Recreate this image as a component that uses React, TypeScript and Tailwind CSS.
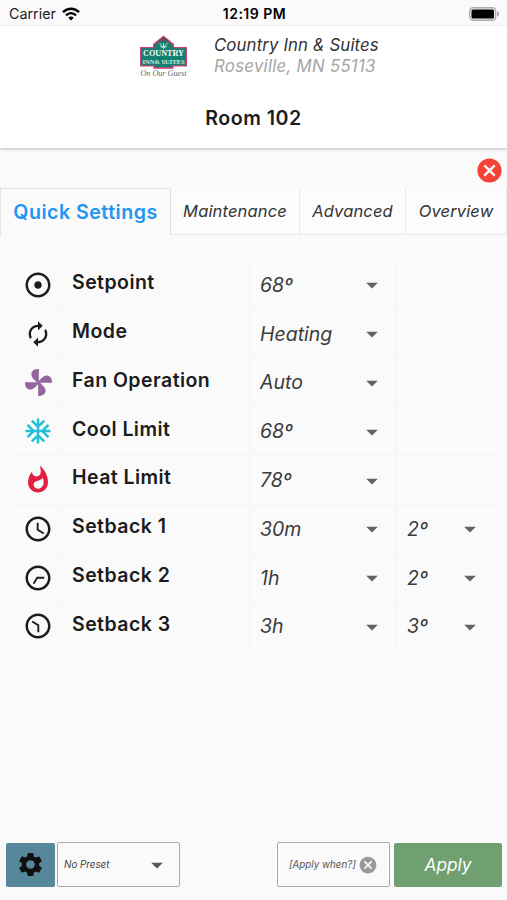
import type { ReactNode } from "react";
import { MdAccessTime, MdAcUnit, MdAdjust, MdArrowDropDown, MdAutorenew, MdCancel, MdSettings, MdWhatshot } from "react-icons/md";

const blade = "M1 1 V-40 C-12 -41 -21 -34 -21 -24 C-21 -15 -12 -8 -3 1 Z";

function FanIcon() {
    return (
        <svg width="27" height="27" viewBox="-40 -40 80 80" fill="#93669d">
            <path d={blade} />
            <path d={blade} transform="rotate(90)" />
            <path d={blade} transform="rotate(180)" />
            <path d={blade} transform="rotate(270)" />
        </svg>
    );
}

function HotelLogo() {
    return (
        <svg width="50" height="44" viewBox="0 0 50 44">
            <path d="M24.5 0.5 L35 9 V12 H48 V31.5 H34.5 V33.7 H14.5 V31.5 H1 V12 H14 V9 Z" fill="#c94070" />
            <path d="M24.5 3 L33.5 10 V13.3 H46.7 V30.2 H33.2 V32.3 H15.8 V30.2 H2.3 V13.3 H15.5 V10 Z" fill="#128073" />
            <path d="M24.5 2 L30 6.5 H19 Z" fill="#59505a" />
            <path d="M20.5 8 L24 12 M28.5 8 L25 12 M24.5 8 V14 M21 11.3 L24.5 12.8 L28 11.3" stroke="#b9dcd5" strokeWidth="1" fill="none" />
            <text x="24.5" y="21.4" textAnchor="middle" textLength="41" lengthAdjust="spacingAndGlyphs" fontFamily="Liberation Serif, serif" fontSize="9" fontWeight="700" fill="#f1faf7">COUNTRY</text>
            <text x="24.5" y="29.1" textAnchor="middle" textLength="42" lengthAdjust="spacingAndGlyphs" fontFamily="Liberation Serif, serif" fontSize="7" fontWeight="700" fill="#d5ece7">INN&amp; SUITES</text>
            <text x="24.5" y="40.8" textAnchor="middle" textLength="46" lengthAdjust="spacingAndGlyphs" fontFamily="Liberation Serif, serif" fontSize="8" fontStyle="italic" fill="#666">On Our Guest</text>
        </svg>
    );
}

function WifiIcon() {
    return (
        <svg width="18" height="14" viewBox="0 0 18 14" fill="none" stroke="#000" strokeWidth="2.4">
            <path d="M1 5.2 C5.5 0.5 12.5 0.5 17 5.2" />
            <path d="M4 8.4 C7 5.3 11 5.3 14 8.4" />
            <path d="M6.3 10.7 C7.9 9.2 10.1 9.2 11.7 10.7 L9 13.6 Z" fill="#000" stroke="none" />
        </svg>
    );
}

function Caret() {
    return <MdArrowDropDown size={28} className="text-[#626262]" />;
}

type Row = {
    icon: ReactNode;
    label: string;
    value: string;
    offset?: string;
};

const rows: Row[] = [
    { icon: <MdAdjust size={30} />, label: "Setpoint", value: "68º" },
    { icon: <MdAutorenew size={28} />, label: "Mode", value: "Heating" },
    { icon: <FanIcon />, label: "Fan Operation", value: "Auto" },
    { icon: <MdAcUnit size={30} className="text-[#20c0d8]" />, label: "Cool Limit", value: "68º" },
    { icon: <MdWhatshot size={30} className="text-[#e3203f]" />, label: "Heat Limit", value: "78º" },
    { icon: <MdAccessTime size={30} />, label: "Setback 1", value: "30m", offset: "2º" },
    { icon: <MdAccessTime size={30} className="rotate-90" />, label: "Setback 2", value: "1h", offset: "2º" },
    { icon: <MdAccessTime size={30} className="rotate-180" />, label: "Setback 3", value: "3h", offset: "3º" },
];

const tabs = [
    { name: "Maintenance", width: "w-[129px]" },
    { name: "Advanced", width: "w-[106px]" },
    { name: "Overview", width: "w-[101px]" },
];

export default function App() {
    return (
        <div className="flex h-[900px] w-[507px] flex-col overflow-hidden bg-[#fafafa] font-['Inter',sans-serif] text-[#1c1c1c]">
            {/* Status bar */}
            <div className="grid h-[26px] shrink-0 grid-cols-3 items-center pt-px pr-[7px] pl-[9px] text-black">
                <div className="flex items-center gap-[6px] text-[14.3px] text-[#222]">
                    <span>Carrier</span>
                    <WifiIcon />
                </div>
                <span className="text-center text-[14px] font-semibold tracking-[0.5px]">12:19 PM</span>
                <div className="flex justify-end">
                    <svg width="31" height="14" viewBox="0 0 31 14">
                        <rect x="0.7" y="0.7" width="26" height="12.6" rx="3.5" fill="#eee" stroke="#aaa" strokeWidth="1.4" />
                        <rect x="2.5" y="2.5" width="22.5" height="9" rx="1.5" fill="#000" />
                        <path d="M28 4.5 C31 5.5 31 8.5 28 9.5 Z" fill="#aaa" />
                    </svg>
                </div>
            </div>

            {/* Header */}
            <header className="h-[122px] shrink-0 bg-white shadow-[0_1px_3px_rgba(0,0,0,0.28)]">
                <div className="flex h-[60px] pt-[9px] pl-[139px]">
                    <HotelLogo />
                    <div className="pl-[25px] text-[16.8px] leading-[21px] italic">
                        <p className="tracking-[0.12px] text-[#333]">Country Inn &amp; Suites</p>
                        <p className="tracking-[0.27px] text-[#a5a5a5]">Roseville, MN 55113</p>
                    </div>
                </div>
                <h1 className="pt-[19px] text-center text-[19.6px] leading-[26px] font-semibold tracking-[0.5px]">Room 102</h1>
            </header>

            <div className="flex h-[40px] shrink-0 items-end justify-end pr-[3px]">
                <MdCancel size={29} className="mb-[3px] text-[#f44336]" />
            </div>

            {/* Tabs */}
            <nav className="flex h-[47px] shrink-0">
                <div className="flex w-[171px] items-center justify-center border-x border-t border-[#e2e2e2] pt-px text-[19.6px] font-semibold tracking-[0.5px] text-[#2196f3]">
                    Quick Settings
                </div>
                {tabs.map((tab) => (
                    <div key={tab.name} className={`${tab.width} flex items-center justify-center border-r border-b border-[#e8e8e8] bg-[#fcfcfc] text-[16.5px] tracking-[0.15px] text-[#333] italic`}>
                        {tab.name}
                    </div>
                ))}
            </nav>

            {/* Settings table */}
            <div className="mt-[26px] ml-[15px] w-[482px]">
                {rows.map((row) => (
                    <div key={row.label} className="grid h-[48.8px] grid-cols-[47px_188px_146px_101px] border-b border-[#f4f4f4] last:border-transparent">
                        <div className="flex items-center justify-center border-r border-[#f4f4f4]">{row.icon}</div>
                        <div className="flex items-center border-r border-[#f4f4f4] pb-[4px] pl-[10px] text-[19.5px] font-semibold tracking-[0.45px]">
                            {row.label}
                        </div>
                        <div className="flex items-center justify-between border-r border-[#f4f4f4] pt-px pr-[9px] pl-[10px] text-[19.5px] text-[#3c3c3c] italic">
                            {row.value}
                            <Caret />
                        </div>
                        <div className="flex items-center justify-between pt-px pr-[13px] pl-[11px] text-[19.5px] text-[#3c3c3c] italic">
                            {row.offset}
                            {row.offset && <Caret />}
                        </div>
                    </div>
                ))}
            </div>

            {/* Bottom actions */}
            <footer className="mt-auto flex h-[58px] shrink-0 pl-[6px]">
                <button className="mt-[0.5px] flex h-[44px] w-[49px] items-center justify-center rounded-[2px] bg-[#56879b]">
                    <MdSettings size={29} className="text-[#111]" />
                </button>
                <button className="ml-[2px] flex h-[45px] w-[123px] items-center justify-between rounded-[2px] border border-[#aaa] pt-px pr-[8px] pl-[6px] text-[9.8px] text-[#444] italic">
                    No Preset
                    <MdArrowDropDown size={28} className="text-[#555]" />
                </button>
                <button className="ml-[97px] flex h-[45px] w-[113px] items-center rounded-[2px] border border-[#aaa] pt-px pl-[11px] text-[9.8px] text-[#555] italic">
                    [Apply when?]
                    <MdCancel size={20} className="ml-[2px] text-[#999]" />
                </button>
                <button className="mt-[0.5px] ml-[4px] h-[44px] w-[108px] rounded-[2px] bg-[#70a070] pt-px text-[17.3px] text-white italic">
                    Apply
                </button>
            </footer>
        </div>
    );
}
